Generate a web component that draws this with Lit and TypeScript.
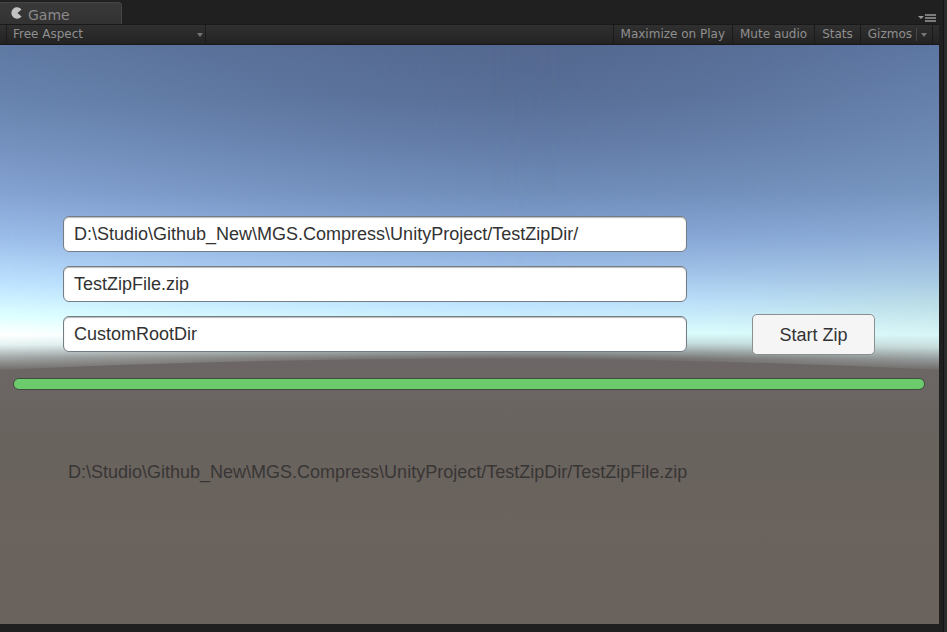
import { LitElement, html, css, svg } from "lit";
import { customElement, state } from "lit/decorators.js";

@customElement("scene-sky")
class SceneSky extends LitElement {
  static styles = css`
    :host { display: block; }
    .sky { display: block; width: 100%; height: 100%; }
  `;

  render() {
    const stops = (list: [number, string][]) =>
      list.map(([at, color]) => svg`<stop offset=${at / 579} stop-color=${color}></stop>`);
    const fade = (list: [number, number][]) =>
      list.map(([at, alpha]) => svg`<stop offset=${at} stop-color="#fff" stop-opacity=${alpha}></stop>`);
    return html`
      <svg class="sky" viewBox="0 0 939 579" preserveAspectRatio="none" aria-hidden="true">
        <defs>
          <linearGradient id="west" x1="0" y1="0" x2="0" y2="1">
            ${stops([[0, "#5f79a3"], [55, "#6784ae"], [105, "#7693c0"], [150, "#85a3d3"], [195, "#9cbeea"], [240, "#bfe4ff"], [270, "#dcffff"], [290, "#ffffff"], [300, "#e4f2f2"], [312, "#a5abaa"], [326, "#6c6765"]])}
          </linearGradient>
          <linearGradient id="mid" x1="0" y1="0" x2="0" y2="1">
            ${stops([[0, "#54688f"], [50, "#586e96"], [95, "#617aa5"], [145, "#6f8cb8"], [190, "#84a3d4"], [220, "#9abbe6"], [255, "#badfff"], [288, "#dcffff"], [298, "#c4dcdc"], [308, "#8a9090"], [314, "#6c6765"]])}
          </linearGradient>
          <linearGradient id="east" x1="0" y1="0" x2="0" y2="1">
            ${stops([[0, "#5d77a3"], [95, "#6c89b3"], [145, "#7695bf"], [195, "#8eaed8"], [235, "#a8c9e2"], [260, "#bcdee7"], [290, "#d8f6f7"], [302, "#c8dcdc"], [314, "#969c9c"], [326, "#6c6765"]])}
          </linearGradient>
          <linearGradient id="fade-west">
            ${fade([[0, 1], [0.1, 0.8], [0.2, 0.59], [0.3, 0.39], [0.4, 0.21], [0.5, 0.08], [0.6, 0]])}
          </linearGradient>
          <linearGradient id="fade-east">
            ${fade([[0.52, 0], [0.62, 0.08], [0.72, 0.24], [0.82, 0.48], [0.92, 0.78], [1, 1]])}
          </linearGradient>
          <mask id="mask-west"><rect width="939" height="579" fill="url(#fade-west)"></rect></mask>
          <mask id="mask-east"><rect width="939" height="579" fill="url(#fade-east)"></rect></mask>
          <linearGradient id="soil" x1="0" y1="0" x2="0" y2="1">
            <stop offset="0" stop-color="#6c6766"></stop>
            <stop offset="0.3" stop-color="#69635e"></stop>
            <stop offset="1" stop-color="#6a625d"></stop>
          </linearGradient>
        </defs>
        <rect width="939" height="579" fill="url(#mid)"></rect>
        <rect width="939" height="579" fill="url(#west)" mask="url(#mask-west)"></rect>
        <rect width="939" height="579" fill="url(#east)" mask="url(#mask-east)"></rect>
        <path d="M0 325Q480 302 939 325V579H0Z" fill="url(#soil)"></path>
      </svg>
    `;
  }
}

@customElement("app-root")
class AppRoot extends LitElement {
  @state() private progress = 100;

  static styles = css`
    :host {
      display: flex;
      flex-direction: column;
      box-sizing: border-box;
      min-height: 100vh;
      padding-right: 8px;
      padding-bottom: 8px;
      background: linear-gradient(to left, #2b2b2b 3px, #151515 3px, #151515 4px, #202020 4px);
      font-family: "Liberation Sans", Arial, sans-serif;
    }
    button, input, select { margin: 0; font: inherit; border-radius: 0; }
    .tabs {
      display: flex;
      align-items: flex-end;
      justify-content: space-between;
      height: 24px;
      font: 14px/20px "DejaVu Sans", sans-serif;
    }
    .tab {
      display: flex;
      align-items: center;
      gap: 5px;
      box-sizing: border-box;
      width: 122px;
      height: 22px;
      padding: 3px 11px 0;
      border: 1px solid #454545;
      border-width: 1px 1px 0 0;
      border-radius: 0 4px 0 0;
      background: linear-gradient(#393939, #323232);
      color: #8a8a8a;
    }
    .pac { width: 12px; height: 12px; margin-bottom: 4px; }
    .menu {
      padding: 0;
      border: 0;
      background: none;
      height: 12px;
      margin-right: 3px;
    }
    .menu svg { display: block; }
    .toolbar {
      display: flex;
      box-sizing: border-box;
      height: 21px;
      padding: 0 6px;
      border-top: 1px solid #191919;
      border-bottom: 1px solid #181818;
      background: linear-gradient(#303030, #232323);
      font: 12px/19px "DejaVu Sans", sans-serif;
      color: #8f8f8f;
    }
    .aspect {
      display: flex;
      align-items: center;
      width: 200px;
      box-sizing: border-box;
      padding-right: 2px;
      border: 1px solid #1c1c1c;
      border-width: 0 1px;
    }
    .aspect select {
      flex: 1;
      appearance: none;
      border: 0;
      padding: 0 6px;
      background: none;
      color: inherit;
    }
    .space { flex: 1; }
    .tool {
      border: 0;
      border-left: 1px solid #1a1a1a;
      padding: 0 7px;
      background: none;
      color: inherit;
      white-space: nowrap;
    }
    .gizmos {
      display: flex;
      align-items: center;
      gap: 4px;
      padding-right: 5px;
      border-right: 1px solid #1a1a1a;
    }
    .rule { width: 1px; height: 13px; background: #474747; }
    .game { flex: 1; display: grid; }
    .game > * { grid-area: 1 / 1; min-height: 0; }
    .content { position: relative; display: flex; flex-direction: column; padding: 171px 14px 0 13px; }
    .form {
      display: grid;
      grid-template-columns: minmax(0, 625fr) minmax(0, 65fr) minmax(0, 123fr);
      align-items: center;
      padding: 0 50px;
    }
    .fields { display: flex; flex-direction: column; gap: 14px; }
    .field {
      box-sizing: border-box;
      width: 100%;
      height: 36px;
      padding: 1px 10px 0;
      border: 1px solid #747c84;
      border-radius: 6px;
      background: #fff;
      box-shadow: inset 0 1px 1px #bbb;
      font-size: 18px;
      color: #323232;
    }
    .start {
      grid-column: 3;
      align-self: end;
      height: 41px;
      padding: 1px 0 0;
      margin-bottom: -3px;
      border: 1px solid #8a8f8f;
      border-radius: 5px;
      background: #f5f5f5;
      font-size: 18px;
      color: #323232;
    }
    .track {
      box-sizing: border-box;
      height: 12px;
      margin-top: 26px;
      border: 1px solid #3b513b;
      border-radius: 6px;
      overflow: hidden;
      background: #555;
    }
    .bar { height: 100%; background: #6ccb6c; }
    .result {
      margin: 72px 55px 0;
      font-size: 18px;
      line-height: 20px;
      color: #383635;
      overflow-wrap: anywhere;
    }
  `;

  private arrow() {
    return html`<svg width="6" height="4" viewBox="0 0 6 4" aria-hidden="true"><path d="M0 0H6L3 4Z" fill="#757575"></path></svg>`;
  }

  render() {
    return html`
      <header class="tabs">
        <div class="tab">
          <svg class="pac" viewBox="0 0 12 12" aria-hidden="true">
            <path d="M10.6 2.6A5.7 5.7 0 1 0 10.6 9.4L6.4 6Z" fill="#c2c2c2"></path>
          </svg>
          <span>Game</span>
        </div>
        <button class="menu" aria-label="Tab options">
          <svg width="18" height="8" viewBox="0 0 18 8" aria-hidden="true">
            <path d="M0 2H6L3 5Z" fill="#999"></path>
            <path d="M7 1H18M7 4H18M7 7H18" stroke="#999" stroke-width="1.4"></path>
          </svg>
        </button>
      </header>
      <div class="toolbar">
        <div class="aspect">
          <select aria-label="Aspect ratio"><option>Free Aspect</option></select>
          ${this.arrow()}
        </div>
        <div class="space"></div>
        <button class="tool">Maximize on Play</button>
        <button class="tool">Mute audio</button>
        <button class="tool">Stats</button>
        <button class="tool gizmos">Gizmos <span class="rule"></span>${this.arrow()}</button>
      </div>
      <main class="game">
        <scene-sky></scene-sky>
        <div class="content">
          <div class="form">
            <div class="fields">
              <input class="field" aria-label="Source directory" value="D:\\Studio\\Github_New\\MGS.Compress\\UnityProject/TestZipDir/" />
              <input class="field" aria-label="Zip file name" value="TestZipFile.zip" />
              <input class="field" aria-label="Root directory" value="CustomRootDir" />
            </div>
            <button class="start">Start Zip</button>
          </div>
          <div class="track" role="progressbar" aria-label="Zip progress" aria-valuenow=${this.progress}>
            <div class="bar" style="width:${this.progress}%"></div>
          </div>
          <p class="result">D:\\Studio\\Github_New\\MGS.Compress\\UnityProject/TestZipDir/TestZipFile.zip</p>
        </div>
      </main>
    `;
  }
}
